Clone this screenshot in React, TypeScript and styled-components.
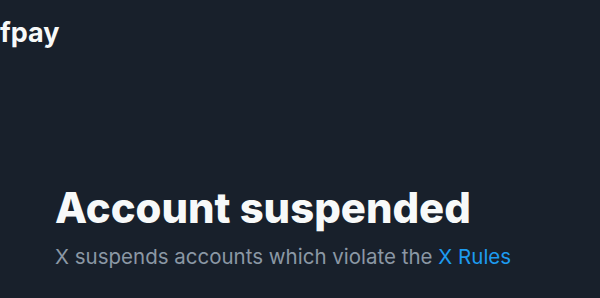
import React from "react";
import styled, { createGlobalStyle } from "styled-components";

const Global = createGlobalStyle`
  html, body { margin: 0; padding: 0; background: #18202b; }
  body { font-family: Inter, "Noto Sans", sans-serif; -webkit-font-smoothing: antialiased; }
`;

const Page = styled.div`
  width: 600px;
  height: 298px;
  background: #18202b;
  overflow: hidden;
  display: flex;
  flex-direction: column;
`;

const Header = styled.div`
  padding-top: 17px;
`;

const Name = styled.div`
  font-weight: 700;
  font-size: 27px;
  color: #f7f9f9;
  line-height: 32px;
`;

const Body = styled.div`
  padding: 135px 0 0 55px;
  display: flex;
  flex-direction: column;
  gap: 13px;
`;

const Title = styled.h1`
  margin: 0;
  font-weight: 800;
  font-size: 41.8px;
  line-height: 48px;
  color: #f7f9f9;
`;

const Sub = styled.p`
  margin: 0;
  font-size: 20.5px;
  line-height: 24px;
  color: #8b98a5;
`;

const Link = styled.a`
  color: #1d9bf0;
  text-decoration: none;
`;

export default function App() {
  return (
    <Page>
      <Global />
      <Header>
        <Name>fpay</Name>
      </Header>
      <Body>
        <Title>Account suspended</Title>
        <Sub>
          X suspends accounts which violate the <Link href="#">X Rules</Link>
        </Sub>
      </Body>
    </Page>
  );
}
